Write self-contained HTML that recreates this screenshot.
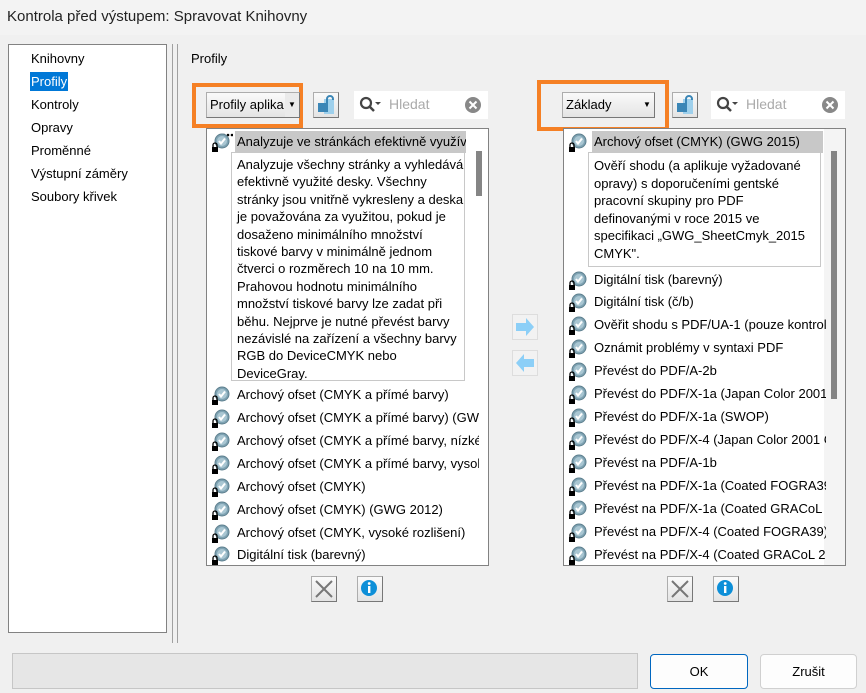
<!DOCTYPE html>
<html><head><meta charset="utf-8"><style>
*{margin:0;padding:0;box-sizing:border-box}
body{width:866px;height:693px;background:#f0f0f0;font-family:"Liberation Sans",sans-serif;font-size:13px;color:#000;position:relative;overflow:hidden}
.a{position:absolute}
.row{position:absolute;height:23px;white-space:nowrap;overflow:hidden;line-height:22px}
.row svg{position:absolute;left:2px;top:2px}
.row span{position:absolute;left:28px}
.btn{position:absolute;background:linear-gradient(#fafafa,#e4e4e4);border:1px solid #adadad;border-right-color:#777;border-bottom-color:#777}
.desc{white-space:nowrap;overflow:hidden}
</style></head><body>
<svg width="0" height="0" style="position:absolute"><defs>
<g id="ic"><circle cx="11" cy="8" r="7" fill="#7fa3b3" stroke="#5d7f8e"/><circle cx="11" cy="8" r="5" fill="#a9c6d2"/><path d="M8 8l2 2.5 4-5" stroke="#fff" stroke-width="2" fill="none"/><path d="M2 14v-2a2 2 0 0 1 4 0v2" stroke="#000" stroke-width="1.3" fill="none"/><rect x="1" y="14" width="6" height="5" fill="#000"/></g>
</defs></svg>
<div class="a" style="left:0;top:0;width:866px;height:35px;background:#f3f3f3"></div>
<div class="a" style="left:7px;top:8px;font-size:15px;color:#222">Kontrola před výstupem: Spravovat Knihovny</div>

<div class="a" style="left:8px;top:44px;width:159px;height:589px;background:#fff;border:1px solid #828282"></div>
<div class="a" style="left:31px;top:47px;line-height:23px">Knihovny<br><span style="background:#0078d7;color:#fff;padding:2px 1px;margin-left:-1px">Profily</span><br>Kontroly<br>Opravy<br>Proměnné<br>Výstupní záměry<br>Soubory křivek</div>
<div class="a" style="left:172px;top:44px;width:1px;height:599px;background:#a0a0a0"></div>
<div class="a" style="left:177px;top:44px;width:1px;height:599px;background:#a0a0a0"></div>
<div class="a" style="left:191px;top:51px">Profily</div>

<div class="a" style="left:192px;top:83px;width:111px;height:45px;border:4px solid #f58025"></div>
<div class="btn" style="left:206px;top:92px;width:94px;height:26px;line-height:24px;padding-left:3px;overflow:hidden">Profily aplika<span style="position:absolute;right:0;top:0;width:14px;height:24px;background:#eaeaea;font-size:8px;text-align:center">▼</span></div>
<div class="btn" style="left:313px;top:92px;width:26px;height:26px"><svg width="24" height="24"><rect x="10" y="6" width="10" height="15" fill="#9ed0ec"/><rect x="4" y="10" width="10" height="9" fill="#3b86b6"/><path d="M13 10V6a3 3 0 0 1 6 0v1" stroke="#3b86b6" stroke-width="2" fill="none"/></svg></div>
<div class="a" style="left:354px;top:91px;width:134px;height:28px;background:#fff"></div>
<svg class="a" style="left:358px;top:95px" width="24" height="20"><circle cx="8" cy="8" r="5" stroke="#444" stroke-width="2.2" fill="none"/><path d="M12 12l4 4" stroke="#444" stroke-width="2.5"/><path d="M17 7h6l-3 3z" fill="#444"/></svg>
<div class="a" style="left:389px;top:96px;color:#aaa;font-size:14px">Hledat</div>
<svg class="a" style="left:464px;top:96px" width="18" height="18"><circle cx="9" cy="9" r="8" fill="#888"/><path d="M5.5 5.5l7 7M12.5 5.5l-7 7" stroke="#fff" stroke-width="2"/></svg>

<div class="a" style="left:206px;top:128px;width:283px;height:438px;background:#fff;border:1px solid #828282;overflow:hidden">
 <div class="a" style="left:269px;top:22px;width:6px;height:45px;background:#858585"></div>
 <div class="row" style="left:2px;top:2px;width:257px"><svg width="22" height="20"><circle cx="13" cy="2" r="1.3"/><circle cx="17" cy="2" r="1.3"/><circle cx="21" cy="2" r="1.3"/><use href="#ic"/></svg><span style="left:26px;background:#c8c8c8;width:232px;padding-left:2px">Analyzuje ve stránkách efektivně využíva</span></div>
 <div class="a desc" style="left:24px;top:23px;width:234px;height:229px;border:1px solid #c8c8c8;padding:3px 5px;line-height:17.4px">Analyzuje všechny stránky a vyhledává<br>efektivně využité desky. Všechny<br>stránky jsou vnitřně vykresleny a deska<br>je považována za využitou, pokud je<br>dosaženo minimálního množství<br>tiskové barvy v minimálně jednom<br>čtverci o rozměrech 10 na 10 mm.<br>Prahovou hodnotu minimálního<br>množství tiskové barvy lze zadat při<br>běhu. Nejprve je nutné převést barvy<br>nezávislé na zařízení a všechny barvy<br>RGB do DeviceCMYK nebo<br>DeviceGray.</div>
 <div class="row" style="left:2px;top:255px;width:270px"><svg width="22" height="20"><use href="#ic"/></svg><span>Archový ofset (CMYK a přímé barvy)</span></div>
 <div class="row" style="left:2px;top:278px;width:270px"><svg width="22" height="20"><use href="#ic"/></svg><span>Archový ofset (CMYK a přímé barvy) (GWG 2012)</span></div>
 <div class="row" style="left:2px;top:301px;width:270px"><svg width="22" height="20"><use href="#ic"/></svg><span>Archový ofset (CMYK a přímé barvy, nízké)</span></div>
 <div class="row" style="left:2px;top:324px;width:270px"><svg width="22" height="20"><use href="#ic"/></svg><span>Archový ofset (CMYK a přímé barvy, vysoké)</span></div>
 <div class="row" style="left:2px;top:347px;width:270px"><svg width="22" height="20"><use href="#ic"/></svg><span>Archový ofset (CMYK)</span></div>
 <div class="row" style="left:2px;top:370px;width:270px"><svg width="22" height="20"><use href="#ic"/></svg><span>Archový ofset (CMYK) (GWG 2012)</span></div>
 <div class="row" style="left:2px;top:393px;width:270px"><svg width="22" height="20"><use href="#ic"/></svg><span>Archový ofset (CMYK, vysoké rozlišení)</span></div>
 <div class="row" style="left:2px;top:415px;width:270px"><svg width="22" height="20"><use href="#ic"/></svg><span>Digitální tisk (barevný)</span></div>
</div>
<div class="btn" style="left:311px;top:576px;width:26px;height:26px"><svg width="24" height="24"><path d="M4 4l16 16M20 4L4 20" stroke="#777" stroke-width="2"/></svg></div>
<div class="btn" style="left:357px;top:576px;width:26px;height:26px"><svg width="24" height="24"><circle cx="11" cy="11" r="8" fill="#0d8fd8"/><rect x="10" y="9" width="2.4" height="7" fill="#fff"/><circle cx="11.2" cy="6.5" r="1.4" fill="#fff"/></svg></div>

<div class="btn" style="left:512px;top:314px;width:26px;height:26px;border-color:#ddd;background:#f2f2f2"><svg width="24" height="24"><path d="M3 8h10V3l8 9-8 9v-5H3z" fill="#8ccff7"/></svg></div>
<div class="btn" style="left:512px;top:350px;width:26px;height:26px;border-color:#ddd;background:#f2f2f2"><svg width="24" height="24"><path d="M21 8H11V3l-8 9 8 9v-5h10z" fill="#8ccff7"/></svg></div>

<div class="a" style="left:537px;top:80px;width:132px;height:51px;border:4px solid #f58025"></div>
<div class="btn" style="left:562px;top:92px;width:93px;height:26px;line-height:24px;padding-left:3px">Základy<span style="position:absolute;right:0;top:0;width:14px;height:24px;font-size:8px;text-align:center">▼</span></div>
<div class="btn" style="left:672px;top:92px;width:26px;height:26px"><svg width="24" height="24"><rect x="10" y="6" width="10" height="15" fill="#9ed0ec"/><rect x="4" y="10" width="10" height="9" fill="#3b86b6"/><path d="M13 10V6a3 3 0 0 1 6 0v1" stroke="#3b86b6" stroke-width="2" fill="none"/></svg></div>
<div class="a" style="left:711px;top:91px;width:134px;height:28px;background:#fff"></div>
<svg class="a" style="left:715px;top:95px" width="24" height="20"><circle cx="8" cy="8" r="5" stroke="#444" stroke-width="2.2" fill="none"/><path d="M12 12l4 4" stroke="#444" stroke-width="2.5"/><path d="M17 7h6l-3 3z" fill="#444"/></svg>
<div class="a" style="left:746px;top:96px;color:#aaa;font-size:14px">Hledat</div>
<svg class="a" style="left:821px;top:96px" width="18" height="18"><circle cx="9" cy="9" r="8" fill="#888"/><path d="M5.5 5.5l7 7M12.5 5.5l-7 7" stroke="#fff" stroke-width="2"/></svg>

<div class="a" style="left:563px;top:128px;width:283px;height:438px;background:#fff;border:1px solid #828282;overflow:hidden">
 <div class="a" style="left:260px;top:0;width:22px;height:438px;background:#f4f4f4"></div>
 <div class="a" style="left:267px;top:22px;width:6px;height:248px;background:#858585"></div>
 <div class="row" style="left:2px;top:2px;width:257px"><svg width="22" height="20"><use href="#ic"/></svg><span style="left:26px;background:#c8c8c8;width:231px;padding-left:2px">Archový ofset (CMYK) (GWG 2015)</span></div>
 <div class="a desc" style="left:24px;top:23px;width:233px;height:115px;border:1px solid #c8c8c8;padding:4px 5px;line-height:17.6px">Ověří shodu (a aplikuje vyžadované<br>opravy) s doporučeními gentské<br>pracovní skupiny pro PDF<br>definovanými v roce 2015 ve<br>specifikaci „GWG_SheetCmyk_2015<br>CMYK".</div>
 <div class="row" style="left:2px;top:140px;width:260px"><svg width="22" height="20"><use href="#ic"/></svg><span>Digitální tisk (barevný)</span></div>
 <div class="row" style="left:2px;top:162px;width:260px"><svg width="22" height="20"><use href="#ic"/></svg><span>Digitální tisk (č/b)</span></div>
 <div class="row" style="left:2px;top:185px;width:260px"><svg width="22" height="20"><use href="#ic"/></svg><span>Ověřit shodu s PDF/UA-1 (pouze kontrola)</span></div>
 <div class="row" style="left:2px;top:208px;width:260px"><svg width="22" height="20"><use href="#ic"/></svg><span>Oznámit problémy v syntaxi PDF</span></div>
 <div class="row" style="left:2px;top:231px;width:260px"><svg width="22" height="20"><use href="#ic"/></svg><span>Převést do PDF/A-2b</span></div>
 <div class="row" style="left:2px;top:254px;width:260px"><svg width="22" height="20"><use href="#ic"/></svg><span>Převést do PDF/X-1a (Japan Color 2001 Coated)</span></div>
 <div class="row" style="left:2px;top:277px;width:260px"><svg width="22" height="20"><use href="#ic"/></svg><span>Převést do PDF/X-1a (SWOP)</span></div>
 <div class="row" style="left:2px;top:300px;width:260px"><svg width="22" height="20"><use href="#ic"/></svg><span>Převést do PDF/X-4 (Japan Color 2001 Coated)</span></div>
 <div class="row" style="left:2px;top:323px;width:260px"><svg width="22" height="20"><use href="#ic"/></svg><span>Převést na PDF/A-1b</span></div>
 <div class="row" style="left:2px;top:346px;width:260px"><svg width="22" height="20"><use href="#ic"/></svg><span>Převést na PDF/X-1a (Coated FOGRA39)</span></div>
 <div class="row" style="left:2px;top:369px;width:260px"><svg width="22" height="20"><use href="#ic"/></svg><span>Převést na PDF/X-1a (Coated GRACoL 2006)</span></div>
 <div class="row" style="left:2px;top:392px;width:260px"><svg width="22" height="20"><use href="#ic"/></svg><span>Převést na PDF/X-4 (Coated FOGRA39)</span></div>
 <div class="row" style="left:2px;top:415px;width:260px"><svg width="22" height="20"><use href="#ic"/></svg><span>Převést na PDF/X-4 (Coated GRACoL 2006)</span></div>
</div>
<div class="btn" style="left:667px;top:576px;width:26px;height:26px"><svg width="24" height="24"><path d="M4 4l16 16M20 4L4 20" stroke="#777" stroke-width="2"/></svg></div>
<div class="btn" style="left:713px;top:576px;width:26px;height:26px"><svg width="24" height="24"><circle cx="11" cy="11" r="8" fill="#0d8fd8"/><rect x="10" y="9" width="2.4" height="7" fill="#fff"/><circle cx="11.2" cy="6.5" r="1.4" fill="#fff"/></svg></div>

<div class="a" style="left:12px;top:653px;width:626px;height:36px;background:#e6e6e6;border:1px solid #c6c6c6"></div>
<div class="a" style="left:650px;top:654px;width:98px;height:35px;background:#fdfdfd;border:1px solid #0067c0;border-radius:4px;text-align:center;line-height:33px">OK</div>
<div class="a" style="left:760px;top:654px;width:97px;height:35px;background:#fdfdfd;border:1px solid #d0d0d0;border-radius:4px;text-align:center;line-height:33px">Zrušit</div>
</body></html>
